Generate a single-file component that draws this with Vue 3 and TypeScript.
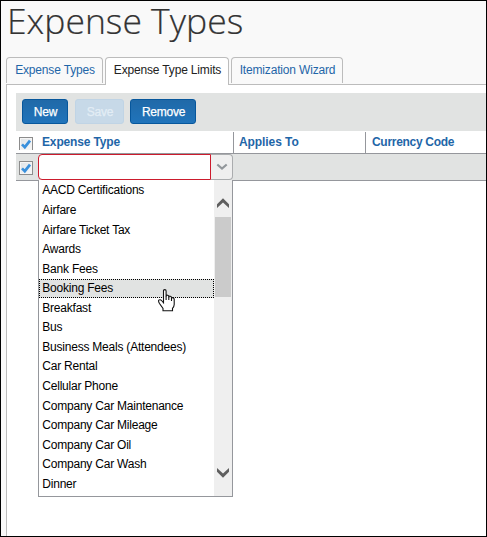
<script setup lang="ts">
import { ref } from 'vue'

const tabs = ['Expense Types', 'Expense Type Limits', 'Itemization Wizard']
const activeTab = ref(1)
const highlighted = ref(5)
const columns = ['Expense Type', 'Applies To', 'Currency Code']
const options = [
  'AACD Certifications', 'Airfare', 'Airfare Ticket Tax', 'Awards', 'Bank Fees',
  'Booking Fees', 'Breakfast', 'Bus', 'Business Meals (Attendees)', 'Car Rental',
  'Cellular Phone', 'Company Car Maintenance', 'Company Car Mileage',
  'Company Car Oil', 'Company Car Wash', 'Dinner',
]
</script>

<template>
  <div class="page">
    <header class="head">
      <h1>Expense Types</h1>
      <nav class="tabs">
        <button v-for="(t, i) in tabs" :key="t" class="tab" :class="{ active: i === activeTab }" @click="activeTab = i">{{ t }}</button>
      </nav>
    </header>
    <main class="panel">
      <div class="toolbar">
        <button class="btn new">New</button>
        <button class="btn save" disabled>Save</button>
        <button class="btn remove">Remove</button>
      </div>
      <div class="row header">
        <span class="check"><svg viewBox="0 0 12 12"><path d="M2 6.4 4.8 9.2 10 2.6" /></svg></span>
        <span v-for="(c, i) in columns" :key="c" class="col" :class="'col' + i">{{ c }}</span>
      </div>
      <div class="row record">
        <span class="check"><svg viewBox="0 0 12 12"><path d="M2 6.4 4.8 9.2 10 2.6" /></svg></span>
        <div class="combo">
          <div class="field"></div>
          <div class="trigger"><svg viewBox="0 0 12 8"><path d="M1.3 1.5 6 5.5 10.7 1.5" /></svg></div>
          <div class="menu">
            <ul>
              <li v-for="(o, i) in options" :key="o" :class="{ on: i === highlighted }">{{ o }}</li>
            </ul>
            <div class="scroll">
              <svg class="arrow" viewBox="0 0 12 10"><path d="M0 6.3 6 0.3 12 6.3V10L6 4.6 0 10Z" /></svg>
              <div class="thumb"></div>
              <svg class="arrow" viewBox="0 0 12 10"><path d="M0 3.7 6 9.7 12 3.7V0L6 5.4 0 0Z" /></svg>
            </div>
            <svg class="cursor" viewBox="0 0 17 23">
              <path d="M5.5 13V2Q5.5.6 6.8.6T8.1 2V7.3Q8.3 6 9.5 6.2T10.8 7.6V8.3Q11 7 12.2 7.2T13.5 8.6V9.4Q13.8 8.3 15 8.7T16.2 10.2V15.5Q16.2 17.4 14.5 19.3V21.7H5V19.5L1.5 14.5Q.1 12 .8 11.2 2.2 10 4 12L5.5 13.8Z" />
              <path class="fingers" d="M8.1 7V11M10.8 8V11M13.5 9V12" />
            </svg>
          </div>
        </div>
      </div>
    </main>
  </div>
</template>

<style>
body { margin: 0; }
</style>

<style scoped>
* { box-sizing: border-box; }
.page {
  width: 487px; height: 537px; border: 1px solid #000; background: #f9f9f9; overflow: hidden;
  font: 12px/14px "Liberation Sans", Arial, sans-serif; display: flex; flex-direction: column;
}
.head { height: 83px; flex: none; display: flex; flex-direction: column; justify-content: space-between; }
h1 {
  margin: 0; padding-left: 6px; height: 50px; line-height: 39px; font-family: "Open Sans", sans-serif;
  font-size: 35.5px; font-weight: 300; color: #333; white-space: nowrap; -webkit-text-stroke: .2px #333;
}
.tabs { display: flex; gap: 2px; padding-left: 5px; height: 27px; }
.tab {
  height: 26px; padding: 0 0 2px 1px; border: 1px solid #bcbcbc; border-bottom: 0; border-radius: 4px 4px 0 0;
  background: #f9f9f9; color: #1f66a8; font: inherit; letter-spacing: -.17px; width: 97px; white-space: nowrap;
}
.tab:nth-child(2) { width: 124px; }
.tab:nth-child(3) { width: 112px; }
.tab.active { background: #fff; color: #222; height: 28px; padding-bottom: 4px; position: relative; }
.panel { margin-left: 5px; flex: 1; background: #fff; border: solid #bcbcbc; border-width: 1px 0 0 1px; padding: 8px 0 0 9px; }
.toolbar { height: 38px; background: #e1e3e2; padding: 6px; display: flex; }
.btn {
  height: 25px; padding: 0 0 0 1px; border: 1px solid #07579c; border-radius: 3px; color: #fff;
  background: linear-gradient(#2069a8, #2074bb); font: inherit; letter-spacing: -.25px; -webkit-text-stroke: .25px currentColor;
}
.new { width: 46px; }
.save { width: 49px; margin: 0 6px 0 7px; background: #c7d9e8; border-color: #c0d4e5; color: #e3edf5; }
.remove { width: 66px; }
.row { display: flex; border-bottom: 1px solid #95979c; }
.header { height: 23px; padding-top: 1px; color: #1f66a8; font-weight: 700; }
.record { height: 27px; background: #e1e3e2; }
.check { flex: none; margin: 7px 5px 0 3px; width: 14px; height: 14px; border: 1px solid #8c8c8c; background: linear-gradient(135deg, #dde2e6, #f9f9f9); box-shadow: inset 0 0 0 1px #f5f5f5; }
.header .check { margin-top: 5px; height: 13px; border-bottom: 0; }
.check svg { display: block; width: 12px; height: 12px; fill: none; stroke: #3990dc; stroke-width: 2.7; }
.col { padding: 3px 0 0 4px; letter-spacing: -.15px; }
.col0 { width: 195px; }
.col1, .col2 { border-left: 1px solid #95979c; padding-left: 5px; }
.col1 { width: 132px; letter-spacing: -.08px; }
.col2 { flex: 1; padding-left: 6px; letter-spacing: -.3px; }
.combo { position: relative; width: 195px; height: 26px; display: flex; }
.field { width: 173px; border: 1px solid #cc1b2d; border-radius: 4px 0 0 4px; background: #fff; }
.trigger { width: 22px; border: 1px solid #aaacae; border-left: 0; border-radius: 0 4px 4px 0; background: #efefef; display: flex; align-items: center; justify-content: center; }
.trigger svg { width: 12px; height: 8px; fill: none; stroke: #92979b; stroke-width: 2.2; }
.menu { position: absolute; top: 26px; left: 0; width: 195px; height: 317px; background: #fff; border: 1px solid #95979c; border-top: 0; display: flex; }
ul { list-style: none; margin: 0; padding: .8px 0 0; width: 175px; }
li { height: 19.55px; padding: 2.7px 0 0 3.3px; color: #000; line-height: 15px; letter-spacing: -.22px; white-space: nowrap; }
li.on { background: #e1e3e2; outline: 1px dotted #000; outline-offset: -1px; }
.scroll { width: 18px; background: #efefef; padding-left: 1px; display: flex; flex-direction: column; }
.arrow { width: 12px; height: 10px; margin: 18px 0 0 2px; fill: #5f5f5f; }
.thumb { margin-top: 9px; height: 80px; width: 16px; background: #cbcbcb; }
.thumb + .arrow { margin-top: 171px; }
.cursor { position: absolute; left: 119px; top: 109px; width: 17px; height: 23px; fill: #fff; stroke: #111; stroke-width: 1.1; }
.cursor .fingers { fill: none; }
</style>
